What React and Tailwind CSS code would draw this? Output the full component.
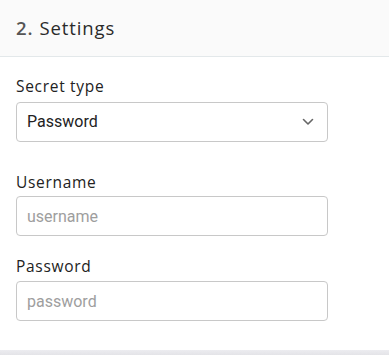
export default function App() {
  const label = "text-[15.5px] leading-[20px] text-[#222] tracking-[0.7px]";
  const input =
    "w-[312px] h-[40px] rounded-[4px] border border-[#c8c8c8] bg-white px-[10px] text-[16px] text-[#222] outline-none placeholder:text-[#9e9e9e]";
  return (
    <div className="w-[389px] h-[355px] bg-white flex flex-col" style={{ fontFamily: "'Open Sans', sans-serif" }}>
      <div className="h-[57px] bg-[#fafafa] border-b border-[#e3e8ea] flex items-center px-[16px] shrink-0 tracking-[0.9px]">
        <span className="text-[18.5px] text-[#555] font-semibold">2.</span>
        <span className="text-[18.5px] text-[#2a2a2a] ml-[6px]">Settings</span>
      </div>
      <div className="flex-1 flex flex-col px-[16px] pt-[19px]">
        <label className={label}>Secret type</label>
        <div
          className="mt-[6px] w-[312px] h-[40px] rounded-[4px] border border-[#c8c8c8] bg-white flex items-center justify-between pl-[10px] pr-[13px]"
          style={{ fontFamily: "Roboto, sans-serif" }}
        >
          <span className="text-[16px] text-[#222]">Password</span>
          <svg width="12" height="8" viewBox="0 0 12 8" fill="none">
            <path d="M1.5 1.5 L6 6 L10.5 1.5" stroke="#666" strokeWidth="1.6" strokeLinecap="round" strokeLinejoin="round" />
          </svg>
        </div>
        <label className={`${label} mt-[30px]`}>Username</label>
        <input
          className={`${input} mt-[4px]`}
          style={{ fontFamily: "Roboto, sans-serif" }}
          placeholder="username"
        />
        <label className={`${label} mt-[20px]`}>Password</label>
        <input
          className={`${input} mt-[5px]`}
          style={{ fontFamily: "Roboto, sans-serif" }}
          placeholder="password"
        />
      </div>
      <div className="h-[5px] shrink-0 bg-gradient-to-b from-[#ececf0] to-[#e4e4e8]" />
    </div>
  );
}
